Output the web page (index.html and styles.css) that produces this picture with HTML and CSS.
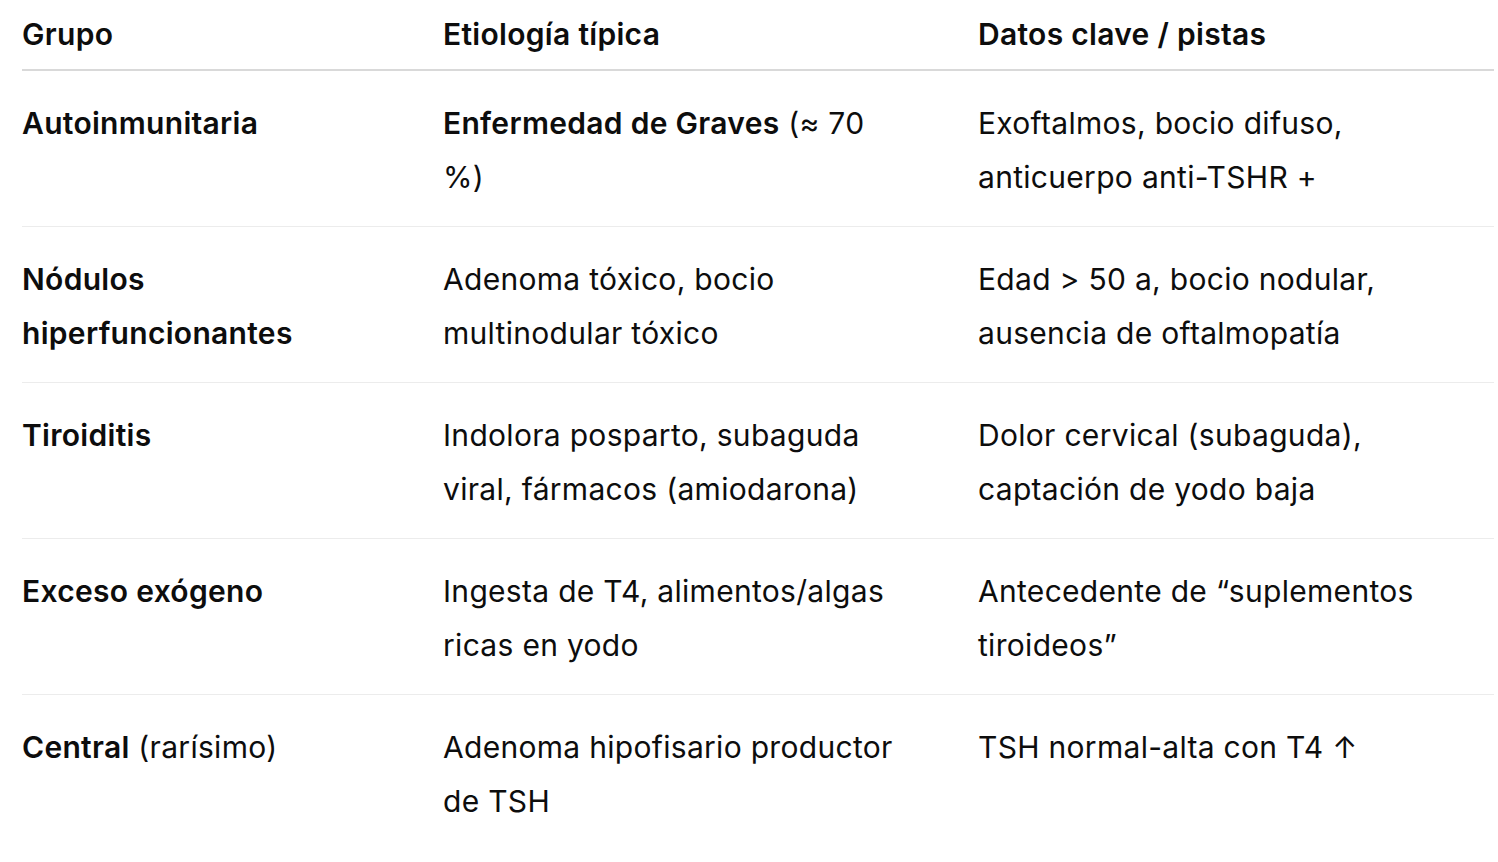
FILE: index.html
```html
<!DOCTYPE html>
<html lang="es">
<head>
<meta charset="utf-8">
<title>Hipertiroidismo</title>
<link rel="stylesheet" href="styles.css">
</head>
<body>
<table class="grid">
  <colgroup>
    <col class="c1">
    <col class="c2">
    <col class="c3">
  </colgroup>
  <thead>
    <tr>
      <th>Grupo</th>
      <th>Etiología típica</th>
      <th>Datos clave / pistas</th>
    </tr>
  </thead>
  <tbody>
    <tr>
      <td><strong>Autoinmunitaria</strong></td>
      <td><strong>Enfermedad de Graves</strong> (≈ 70 %)</td>
      <td>Exoftalmos, bocio difuso, anticuerpo anti-TSHR +</td>
    </tr>
    <tr>
      <td><strong>Nódulos hiperfuncionantes</strong></td>
      <td>Adenoma tóxico, bocio multinodular tóxico</td>
      <td>Edad &gt; 50 a, bocio nodular, ausencia de oftalmopatía</td>
    </tr>
    <tr>
      <td><strong>Tiroiditis</strong></td>
      <td>Indolora posparto, subaguda viral, fármacos (amiodarona)</td>
      <td>Dolor cervical (subaguda), captación de yodo baja</td>
    </tr>
    <tr>
      <td><strong>Exceso exógeno</strong></td>
      <td>Ingesta de T4, alimentos/algas ricas en yodo</td>
      <td>Antecedente de “suplementos tiroideos”</td>
    </tr>
    <tr>
      <td><strong>Central</strong> (rarísimo)</td>
      <td>Adenoma hipofisario productor de TSH</td>
      <td>TSH normal-alta con T4 ↑</td>
    </tr>
  </tbody>
</table>
</body>
</html>
```

FILE: styles.css
```css
html, body {
  margin: 0;
  padding: 0;
  background: #ffffff;
}

body {
  padding: 0 4px 0 22px;
  font-family: Inter, "Noto Sans", "Liberation Sans", sans-serif;
  font-size: 30px;
  letter-spacing: 0.3px;
  line-height: 54px;
  color: #0d0d0d;
}

.grid {
  width: 1472px;
  border-collapse: collapse;
  table-layout: fixed;
}

.c1 { width: 421px; }
.c2 { width: 535px; }
.c3 { width: 516px; }

.grid th,
.grid td {
  text-align: left;
  vertical-align: top;
  padding-left: 0;
}

.grid th {
  font-weight: 600;
  padding-top: 7px;
  padding-bottom: 8px;
  border-bottom: 2px solid #d9d9d9;
}

.grid td {
  padding-top: 25px;
  padding-bottom: 22px;
  border-bottom: 1px solid #ececec;
}

.grid th:nth-child(1),
.grid td:nth-child(1) { padding-right: 36px; }

.grid th:nth-child(2),
.grid td:nth-child(2) { padding-right: 73px; }

.grid th:nth-child(3),
.grid td:nth-child(3) { padding-right: 36px; }

.grid tbody tr:last-child td {
  border-bottom: none;
}

.grid strong {
  font-weight: 600;
}
```
